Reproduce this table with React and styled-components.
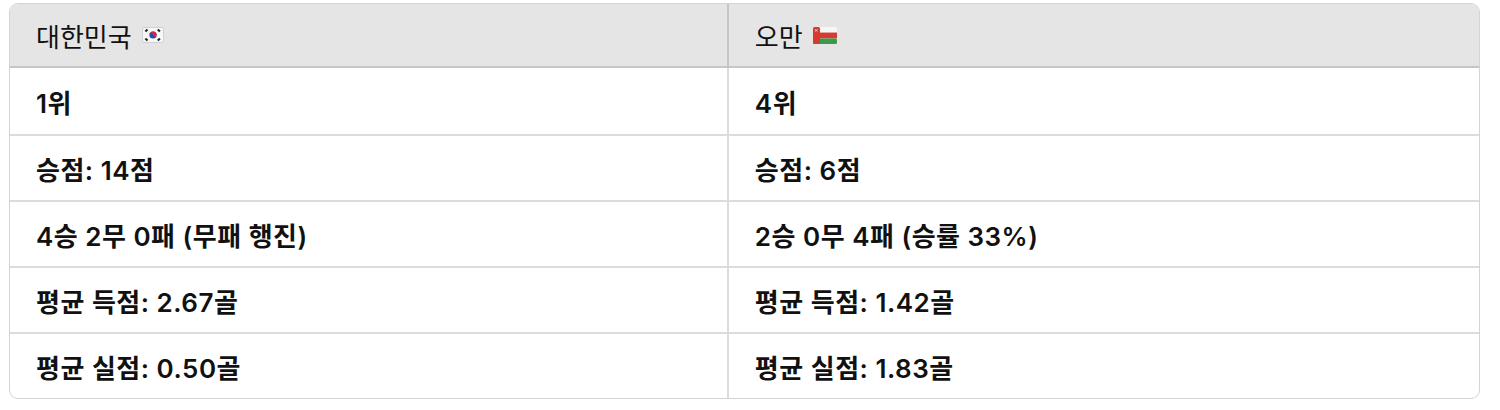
import React from "react";
import styled, { createGlobalStyle } from "styled-components";

const GlobalStyle = createGlobalStyle`
  body {
    margin: 0;
    background: #ffffff;
    font-family: Inter, "Noto Sans CJK KR", "Noto Sans", sans-serif;
    color: #111111;
  }
`;

const Page = styled.div`
  padding: 3px 20px 0 9px;
`;

const Table = styled.table`
  width: 100%;
  border-collapse: separate;
  border-spacing: 0;
  border: 1px solid #d4d4d4;
  border-radius: 9px;
  overflow: hidden;
  table-layout: fixed;
`;

const HeadCell = styled.th`
  background: #e5e5e5;
  height: 64px;
  padding: 0 0 0 26px;
  text-align: left;
  font-size: 26px;
  font-weight: 400;
  border-bottom: 2px solid #c6c6c6;
  border-left: ${(p) => (p.first ? "none" : "2px solid #c6c6c6")};
  box-sizing: border-box;
`;

const Cell = styled.td`
  height: 66px;
  padding: 0 0 0 26px;
  font-size: 26px;
  font-weight: 600;
  letter-spacing: 0.5px;
  border-top: ${(p) => (p.firstRow ? "none" : "2px solid #dcdcdc")};
  border-left: ${(p) => (p.first ? "none" : "2px solid #dcdcdc")};
  box-sizing: border-box;
`;

const HeadLabel = styled.span`
  display: inline-flex;
  align-items: center;
  gap: 10px;
`;

const KoreaFlag = () => (
  <svg width="22" height="16" viewBox="0 0 22 16">
    <rect x="0.5" y="0.5" width="21" height="15" rx="1.5" fill="#f7f7f7" stroke="#d0d0d0" />
    <circle cx="11" cy="8" r="3.6" fill="#1f4fa8" />
    <path d="M7.4 8 A3.6 3.6 0 0 1 14.6 8 A1.8 1.8 0 0 1 11 8 A1.8 1.8 0 0 0 7.4 8 Z" fill="#d6283a" />
    <g stroke="#222" strokeWidth="1.1">
      <path d="M3 4.2 L5.2 2.2 M3.7 4.9 L5.9 2.9" />
      <path d="M16.1 2.2 L18.3 4.2 M15.4 2.9 L17.6 4.9" />
      <path d="M3 11.8 L5.2 13.8 M3.7 11.1 L5.9 13.1" />
      <path d="M16.1 13.8 L18.3 11.8 M15.4 13.1 L17.6 11.1" />
    </g>
  </svg>
);

const OmanFlag = () => (
  <svg width="24" height="17" viewBox="0 0 24 17">
    <rect x="0" y="0" width="24" height="5.6" rx="1.5" fill="#f7f7f7" />
    <rect x="0" y="5.6" width="24" height="5.8" fill="#d83a32" />
    <rect x="0" y="11.4" width="24" height="5.6" rx="1.5" fill="#3a9a4c" />
    <rect x="0" y="0" width="7" height="17" rx="1.5" fill="#d83a32" />
    <path d="M2 2.4 L4.6 4.4 M4.6 2.4 L2 4.4" stroke="#f3e0c0" strokeWidth="0.8" />
  </svg>
);

const teams = [
  {
    name: "대한민국",
    flag: <KoreaFlag />,
    rows: ["1위", "승점: 14점", "4승 2무 0패 (무패 행진)", "평균 득점: 2.67골", "평균 실점: 0.50골"],
  },
  {
    name: "오만",
    flag: <OmanFlag />,
    rows: ["4위", "승점: 6점", "2승 0무 4패 (승률 33%)", "평균 득점: 1.42골", "평균 실점: 1.83골"],
  },
];

export default function App() {
  return (
    <Page>
      <GlobalStyle />
      <Table>
        <colgroup>
          <col style={{ width: "48.8%" }} />
          <col />
        </colgroup>
        <thead>
          <tr>
            {teams.map((t, i) => (
              <HeadCell key={t.name} first={i === 0}>
                <HeadLabel>
                  {t.name}
                  {t.flag}
                </HeadLabel>
              </HeadCell>
            ))}
          </tr>
        </thead>
        <tbody>
          {teams[0].rows.map((_, r) => (
            <tr key={r}>
              {teams.map((t, i) => (
                <Cell key={t.name} first={i === 0} firstRow={r === 0}>
                  {t.rows[r]}
                </Cell>
              ))}
            </tr>
          ))}
        </tbody>
      </Table>
    </Page>
  );
}
